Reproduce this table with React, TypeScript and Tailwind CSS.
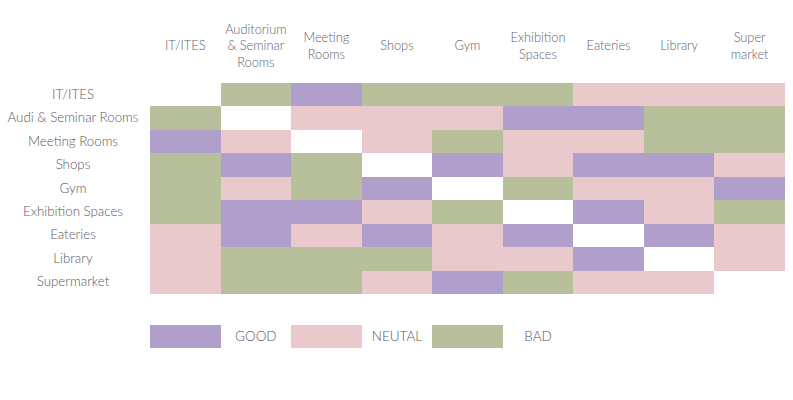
import React from "react";

const cols = [
  ["IT/ITES"],
  ["Auditorium", "& Seminar", "Rooms"],
  ["Meeting", "Rooms"],
  ["Shops"],
  ["Gym"],
  ["Exhibition", "Spaces"],
  ["Eateries"],
  ["Library"],
  ["Super", "market"],
];

const rows = [
  "IT/ITES",
  "Audi & Seminar Rooms",
  "Meeting Rooms",
  "Shops",
  "Gym",
  "Exhibition Spaces",
  "Eateries",
  "Library",
  "Supermarket",
];

const matrix = [
  "WBGBBBNNN",
  "BWNNNGGBB",
  "GNWNBNNBB",
  "BGBWGNGGN",
  "BNBGWBNNG",
  "BGGNBWGNB",
  "NGNGNGWGN",
  "NBBBNNGWN",
  "NBBNGBNNW",
];

const bg: Record<string, string> = {
  G: "bg-[#b09fcb]",
  N: "bg-[#e9c9cc]",
  B: "bg-[#b8bf9b]",
  W: "bg-white",
};

export default function App() {
  return (
    <div
      className="w-[793px] h-[400px] bg-white text-[#585866] pt-[8px] font-light"
      style={{ fontFamily: "Lato, 'Open Sans', sans-serif" }}
    >
      <div className="grid grid-cols-[150px_repeat(9,70.56px)]">
        <div className="h-[75px]" />
        {cols.map((c, i) => (
          <div
            key={i}
            className="h-[75px] flex flex-col items-center justify-center text-[12.8px] leading-[16.5px] text-center text-[#60606e]"
          >
            {c.map((l, j) => (
              <span key={j}>{l}</span>
            ))}
          </div>
        ))}
        {rows.map((r, ri) => (
          <React.Fragment key={ri}>
            <div className="h-[23.45px] flex items-center justify-center pr-[4px] text-[13.3px] whitespace-nowrap">
              {r}
            </div>
            {matrix[ri].split("").map((c, ci) => (
              <div key={ci} className={`h-[23.45px] ${bg[c]}`} />
            ))}
          </React.Fragment>
        ))}
      </div>
      <div className="grid grid-cols-[150px_repeat(9,70.56px)] mt-[30.6px] text-[13.5px]">
        <div />
        <div className="h-[23.45px] bg-[#b09fcb]" />
        <div className="h-[23.45px] flex items-center justify-center">GOOD</div>
        <div className="h-[23.45px] bg-[#e9c9cc]" />
        <div className="h-[23.45px] flex items-center justify-center">NEUTAL</div>
        <div className="h-[23.45px] bg-[#b8bf9b]" />
        <div className="h-[23.45px] flex items-center justify-center">BAD</div>
      </div>
    </div>
  );
}
